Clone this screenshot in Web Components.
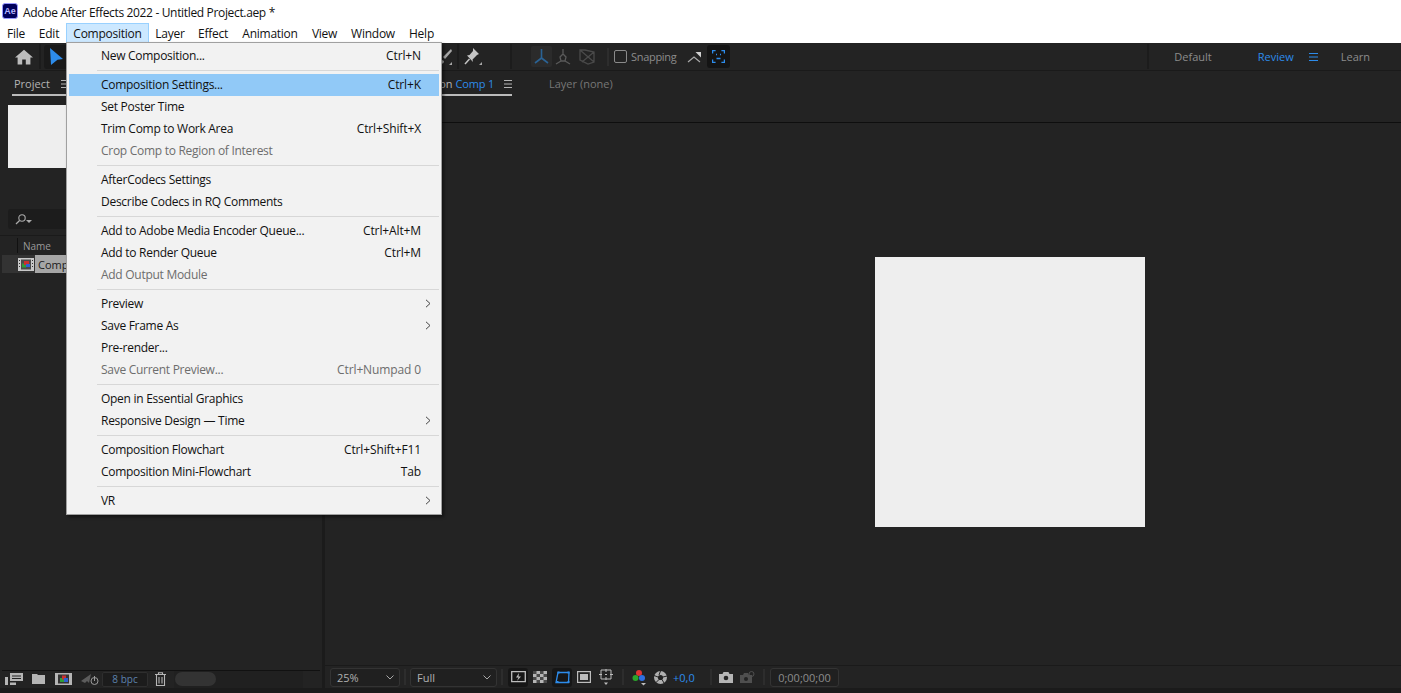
<!DOCTYPE html>
<html lang="en">
<head>
<meta charset="UTF-8" />
<title>Adobe After Effects 2022</title>
<style>
    html, body { margin: 0; height: 100%; background: #1b1b1b; overflow: hidden; }
    body { font-family: "Open Sans", "Noto Sans", sans-serif; }
</style>
</head>
<body>
<ae-app>
    <ae-title-bar title-text="Adobe After Effects 2022 - Untitled Project.aep *"></ae-title-bar>
    <ae-menu-bar></ae-menu-bar>
    <ae-toolbar></ae-toolbar>
    <ae-workspace>
        <ae-project-panel slot="left"></ae-project-panel>
        <ae-viewer-panel slot="right"></ae-viewer-panel>
    </ae-workspace>
    <ae-menu>
        <ae-menu-item shortcut="Ctrl+N">New Composition...</ae-menu-item>
        <ae-menu-sep></ae-menu-sep>
        <ae-menu-item shortcut="Ctrl+K" active>Composition Settings...</ae-menu-item>
        <ae-menu-item>Set Poster Time</ae-menu-item>
        <ae-menu-item shortcut="Ctrl+Shift+X">Trim Comp to Work Area</ae-menu-item>
        <ae-menu-item disabled>Crop Comp to Region of Interest</ae-menu-item>
        <ae-menu-sep></ae-menu-sep>
        <ae-menu-item>AfterCodecs Settings</ae-menu-item>
        <ae-menu-item>Describe Codecs in RQ Comments</ae-menu-item>
        <ae-menu-sep></ae-menu-sep>
        <ae-menu-item shortcut="Ctrl+Alt+M">Add to Adobe Media Encoder Queue...</ae-menu-item>
        <ae-menu-item shortcut="Ctrl+M">Add to Render Queue</ae-menu-item>
        <ae-menu-item disabled>Add Output Module</ae-menu-item>
        <ae-menu-sep></ae-menu-sep>
        <ae-menu-item submenu>Preview</ae-menu-item>
        <ae-menu-item submenu>Save Frame As</ae-menu-item>
        <ae-menu-item>Pre-render...</ae-menu-item>
        <ae-menu-item disabled shortcut="Ctrl+Numpad 0">Save Current Preview...</ae-menu-item>
        <ae-menu-sep></ae-menu-sep>
        <ae-menu-item>Open in Essential Graphics</ae-menu-item>
        <ae-menu-item submenu>Responsive Design — Time</ae-menu-item>
        <ae-menu-sep></ae-menu-sep>
        <ae-menu-item shortcut="Ctrl+Shift+F11">Composition Flowchart</ae-menu-item>
        <ae-menu-item shortcut="Tab">Composition Mini-Flowchart</ae-menu-item>
        <ae-menu-sep></ae-menu-sep>
        <ae-menu-item submenu>VR</ae-menu-item>
    </ae-menu>
</ae-app>

<script type="module">
    const MENU_FONT = '"Open Sans", "Noto Sans", sans-serif';

    // small helper, every element here is just a shadow root with a fixed template
    function define(name, html, init) {
        customElements.define(name, class extends HTMLElement {
            constructor() {
                super();
                this.attachShadow({ mode: 'open' });
                this.shadowRoot.innerHTML = html;
                if (init) init(this);
            }
        });
    }

    define('ae-app', `
        <style>
            :host { display: flex; flex-direction: column; position: relative; width: 1401px; height: 693px; overflow: hidden; }
        </style>
        <slot></slot>
    `);

    define('ae-title-bar', `
        <style>
            :host { display: flex; align-items: center; height: 23px; background: #fff; color: #111; font: 12px ${MENU_FONT}; letter-spacing: -0.34px; padding: 1px 0 0 2px; box-sizing: border-box; }
            .logo { width: 16px; height: 16px; border-radius: 3px; background: #00005b; border: 1px solid #9999ff; box-sizing: border-box; color: #b5b5ff; font: bold 9px "Liberation Sans", sans-serif; letter-spacing: 0; display: flex; align-items: center; justify-content: center; margin: -2px 5px 0 0; }
        </style>
        <span class="logo">Ae</span><span class="t"></span>
    `, el => {
        el.shadowRoot.querySelector('.t').textContent = el.getAttribute('title-text');
    });

    define('ae-menu-bar', `
        <style>
            :host { display: flex; height: 20px; background: #fff; color: #111; font: 12px ${MENU_FONT}; letter-spacing: -0.25px; }
            span { display: flex; align-items: center; padding: 0 6px 1px; border: 1px solid transparent; border-bottom: 0; box-sizing: border-box; white-space: nowrap; justify-content: center; }
            .on { background: #cce8ff; border-color: #99d1ff; }
        </style>
        <span style="width:32px">File</span>
        <span style="width:34px">Edit</span>
        <span class="on" style="width:83px">Composition</span>
        <span style="width:42px">Layer</span>
        <span style="width:44px">Effect</span>
        <span style="width:70px">Animation</span>
        <span style="width:39px">View</span>
        <span style="width:58px">Window</span>
        <span style="width:39px">Help</span>
    `);

    define('ae-menu', `
        <style>
            :host { position: absolute; left: 66px; top: 42px; width: 376px; box-sizing: border-box; background: #f2f2f2; border: 1px solid #a0a0a0; padding: 2px; box-shadow: 2px 2px 3px rgba(0,0,0,.45); z-index: 5; }
        </style>
        <slot></slot>
    `);

    define('ae-menu-item', `
        <style>
            :host { display: flex; align-items: center; height: 22px; box-sizing: border-box; padding: 0 18px 2px 32px; font: 12px ${MENU_FONT}; letter-spacing: -0.28px; color: #111; position: relative; white-space: nowrap; }
            :host([active]) { background: #91c9f7; }
            :host([disabled]) { color: #6d6d6d; }
            .sc { margin-left: auto; letter-spacing: -0.12px; }
            svg { position: absolute; right: 8px; top: 6px; }
        </style>
        <slot></slot><span class="sc"></span>
    `, el => {
        const s = el.shadowRoot;
        if (el.hasAttribute('shortcut')) s.querySelector('.sc').textContent = el.getAttribute('shortcut');
        if (el.hasAttribute('submenu')) {
            s.querySelector('.sc').insertAdjacentHTML('afterend', '<svg width="6" height="9" viewBox="0 0 6 9"><path d="M1 .8 5 4.5 1 8.2" fill="none" stroke="#444" stroke-width="1"/></svg>');
        }
    });

    define('ae-menu-sep', `
        <style>
            :host { display: block; height: 1px; margin: 3px 0 3px 28px; background: #d7d7d7; }
        </style>
    `);

    define('ae-toolbar', `
        <style>
            :host { display: flex; align-items: center; height: 27px; background: #232323; color: #8c8c8c; font: 11px "Open Sans", sans-serif; border-bottom: 1px solid #1a1a1a; flex: none; }
            .home { margin-left: 15px; }
            .sep { width: 2px; height: 25px; background: #1c1c1c; flex: none; }
            .sel { width: 24px; height: 24px; background: #1a1a1a; border-radius: 3px; margin-left: 3px; display: flex; align-items: center; justify-content: center; flex: none; }
            .under { width: 370px; flex: none; }
            .axis { width: 21px; height: 21px; margin-left: 19px; background: #2b2b2b; border-radius: 2px; flex: none; }
            .check { width: 11px; height: 11px; border: 1.5px solid #8a8a8a; border-radius: 2px; margin: 0 4px 0 5px; flex: none; }
            .focus { width: 23px; height: 23px; background: #141414; border-radius: 3px; margin-left: 6px; display: flex; align-items: center; justify-content: center; flex: none; }
            .ws { margin-left: auto; display: flex; align-items: center; height: 100%; }
            .ws span { white-space: nowrap; }
            .blue { color: #2d8ceb; }
        </style>
        <svg class="home" width="18" height="16" viewBox="0 0 18 16"><path d="M9 .8 0 8.600h2.600V15.500h4.600v-5h3.600v5h4.600V8.600H18z" fill="#bdbdbd"/></svg>
        <span class="sep" style="margin-left:6px"></span>
        <span class="sel"><svg width="13" height="17" viewBox="0 0 13 17"><path d="M0 0 13 11 7.500 11.800 1 17z" fill="#2d8ceb"/></svg></span>
        <span class="under"></span>
        <svg width="14" height="18" viewBox="0 0 14 18" style="flex:none"><path d="M13 1 5 9l2 2 7-8zM1 15c2 0 3-1 3-3l2 1c0 3-2 3-5 2z" fill="#a8a8a8"/><path d="M11 17h3v-3z" fill="#a8a8a8"/></svg>
        <span class="sep" style="margin-left:5px"></span>
        <svg width="20" height="20" viewBox="0 0 20 20" style="margin-left:4px;flex:none"><path d="M10 1 16 7 14 8 9.500 12.500 10 15 4 8.500 6.500 8 10 4z" fill="#c4c4c4"/><path d="M6.500 12 2 17" stroke="#c4c4c4" stroke-width="1.500"/><path d="M16 18h3v-3z" fill="#a8a8a8"/></svg>
        <span class="sep" style="margin-left:27px"></span>
        <svg class="axis" viewBox="0 0 21 21"><g fill="none" stroke="#2a6294" stroke-width="1.600"><path d="M10.500 3v9M10.500 12 4 17M10.500 12l6.500 5"/></g></svg>
        <svg width="20" height="20" viewBox="0 0 20 20" style="margin-left:1px;flex:none"><g fill="none" stroke="#5a5a5a" stroke-width="1.300"><path d="M10 2v5M7 10l3-3 3 3-1 4H8zM8 14l-5 3M12 14l5 3"/></g></svg>
        <svg width="18" height="18" viewBox="0 0 18 18" style="margin-left:5px;flex:none"><g fill="none" stroke="#4a4a4a" stroke-width="1.300"><path d="M2 2h5l9 2v10l-6 2-8-4zM2 2l14 12M16 4 4 14"/></g></svg>
        <span class="sep" style="height:18px;margin-left:11px;background:#2d2d2d"></span>
        <span class="check"></span>
        <span style="white-space:nowrap;letter-spacing:-.3px">Snapping</span>
        <svg width="14" height="14" viewBox="0 0 14 14" style="margin-left:11px;flex:none"><path d="M1 12 7 7l6 5" fill="none" stroke="#a8a8a8" stroke-width="1.200"/><path d="M8.500 2H14v5.500z" fill="#d0d0d0"/></svg>
        <span class="focus"><svg width="13" height="13" viewBox="0 0 13 13"><g fill="none" stroke="#2d8ceb" stroke-width="1.300"><path d="M.6 3.500V.6h3M9.400.6h3v2.900M12.400 9.500v2.900h-3M3.600 12.400h-3V9.500M4 4.500h1M8 4.500h1M4.500 8.500h4"/></g></svg></span>
        <div class="ws">
            <span class="sep" style="margin-right:25px"></span>
            <span>Default</span>
            <span class="blue" style="margin-left:46px">Review</span>
            <svg width="9" height="8" viewBox="0 0 9 8" style="margin-left:15px"><path d="M0 .5h9M0 4h9M0 7.500h9" stroke="#2d8ceb"/></svg>
            <span style="margin:0 31px 0 23px">Learn</span>
        </div>
    `);

    define('ae-workspace', `
        <style>
            :host { display: flex; gap: 3px; height: 617px; flex: none; }
            ::slotted([slot=left]) { width: 322px; flex: none; }
            ::slotted([slot=right]) { flex: 1; min-width: 0; }
        </style>
        <slot name="left"></slot><slot name="right"></slot>
    `);

    define('ae-hamburger', `
        <style>
            :host { display: inline-flex; }
        </style>
        <svg width="8" height="8" viewBox="0 0 8 8"><path d="M0 .5h8M0 4h8M0 7.500h8" stroke="#b4b4b4"/></svg>
    `);

    define('ae-project-panel', `
        <style>
            :host { display: flex; flex-direction: column; background: #232323; color: #b4b4b4; font: 11px "Open Sans", sans-serif; }
            .tab { display: flex; align-items: center; justify-content: space-between; width: 57px; height: 25px; margin-left: 12px; padding: 2px 0 0 2px; box-sizing: border-box; border-bottom: 2px solid #bbb; white-space: nowrap; }
            .thumb { width: 120px; height: 63px; margin: 9px 0 0 8px; background: #eee; }
            .search { display: flex; align-items: center; width: 120px; height: 20px; margin: 41px 0 0 8px; background: #1c1c1c; border-radius: 3px; padding-left: 7px; box-sizing: border-box; }
            .head { display: flex; align-items: center; height: 19px; margin-top: 6px; border-top: 1px solid #1a1a1a; font-size: 10px; color: #9a9a9a; }
            .head i { width: 1px; height: 15px; background: #111; margin: 0 5px 0 17px; }
            .row { display: flex; align-items: center; height: 18px; margin-left: 2px; background: #333; }
            .icon { margin-left: 16px; flex: none; }
            .name { background: #a6a6a6; color: #1a1a1a; height: 100%; display: flex; align-items: center; padding: 0 0 0 3px; margin-left: 1px; white-space: nowrap; width: 60px; }
            .fill { flex: 1; }
            .foot { display: flex; align-items: center; height: 16px; padding-bottom: 1px; border-top: 1px solid #111; margin: 0 2px; }
            .foot svg { flex: none; }
            .bpc { width: 46px; height: 15px; background: #1c1c1c; border: 1px solid #2e2e2e; border-radius: 2px; color: #5d82ad; font-size: 10px; display: flex; align-items: center; justify-content: center; box-sizing: border-box; margin-left: 3px; flex: none; }
            .pill { width: 41px; height: 14px; background: #333; border-radius: 8px; flex: none; margin-left: 1px; }
            .dark { width: 129px; height: 17px; background: #202020; margin: -1px 0 -1px 8px; display: flex; align-items: center; flex: none; }
        </style>
        <div class="tab">Project<ae-hamburger></ae-hamburger></div>
        <div class="thumb"></div>
        <div class="search"><svg width="18" height="11" viewBox="0 0 18 11"><circle cx="7" cy="4" r="3.200" fill="none" stroke="#aaa" stroke-width="1.100"/><path d="M4.600 6.500 1 10" stroke="#aaa" stroke-width="1.200"/><path d="M11 6h6l-3 3z" fill="#aaa"/></svg></div>
        <div class="head"><i></i>Name</div>
        <div class="row">
            <svg class="icon" width="16" height="13" viewBox="0 0 16 13"><rect width="16" height="13" fill="#c8c8c8"/><rect x="3" y="1.500" width="10" height="10" fill="#4a4a4a"/><path d="M1 2h1v1H1zM1 5h1v1H1zM1 8h1v1H1zM14 2h1v1h-1zM14 5h1v1h-1zM14 8h1v1h-1z" fill="#333"/><rect x="4" y="5.500" width="4" height="4" fill="#2e9c3a"/><rect x="6" y="3" width="5" height="4" fill="#c93030"/><rect x="8" y="6" width="4" height="3" fill="#2f5fd0"/></svg>
            <span class="name">Comp 1</span>
        </div>
        <div class="fill"></div>
        <div class="foot">
            <svg width="18" height="12" viewBox="0 0 18 12" style="margin-left:3px"><path d="M5 0h13v8H5zM7 2.500h9v1H7zM7 5h9v1H7z" fill="#b5b5b5" fill-rule="evenodd"/><path d="M0 4h3v8H0zM5 9.500h6V12H5z" fill="#b5b5b5"/></svg>
            <svg width="13" height="10" viewBox="0 0 13 10" style="margin-left:9px"><path d="M0 0h5l1 1h7v9H0z" fill="#b5b5b5"/></svg>
            <svg width="17" height="12" viewBox="0 0 17 12" style="margin-left:10px"><rect width="17" height="12" fill="#b5b5b5"/><rect x="3" y="1.500" width="11" height="9" fill="#333"/><rect x="5" y="5" width="4" height="4" fill="#2e9c3a"/><rect x="7" y="2.500" width="4" height="4" fill="#c93030"/><rect x="9" y="5" width="4" height="4" fill="#2f5fd0"/></svg>
            <svg width="18" height="13" viewBox="0 0 18 13" style="margin-left:9px"><path d="M0 8 10 1l-2 9-2-2-2 2z" fill="#5c5c5c"/><circle cx="13.500" cy="8" r="3.500" fill="none" stroke="#9a9a9a"/><path d="M13.500 3v5" stroke="#9a9a9a"/></svg>
            <span class="bpc">8 bpc</span>
            <svg width="11" height="14" viewBox="0 0 11 14" style="margin-left:7px"><path d="M0 2.500h11M3.500 2.500V.7h4v1.800M1.500 3v10.500h8V3M4 5v6.500M7 5v6.500" fill="none" stroke="#b5b5b5" stroke-width="1.100"/></svg>
            <div class="dark"><span class="pill"></span></div>
        </div>
    `);

    define('ae-dropdown', `
        <style>
            :host { display: flex; align-items: center; justify-content: space-between; height: 19px; box-sizing: border-box; padding: 0 5px 0 6px; border: 1px solid #333; border-radius: 3px; background: #202020; color: #b0b0b0; font: 11px "Open Sans", sans-serif; flex: none; }
        </style>
        <slot></slot><svg width="8" height="5" viewBox="0 0 8 5"><path d="M.5.500 4 4l3.500-3.500" fill="none" stroke="#a8a8a8"/></svg>
    `);

    define('ae-viewer-panel', `
        <style>
            :host { display: flex; flex-direction: column; background: #232323; color: #777; font: 11px "Open Sans", sans-serif; }
            .tabs { display: flex; height: 51px; border-bottom: 1px solid #0e0e0e; flex: none; box-sizing: content-box; align-items: flex-start; }
            .tab { display: flex; align-items: center; justify-content: flex-end; width: 187px; height: 25px; box-sizing: border-box; padding-top: 2px; border-bottom: 2px solid #bbb; color: #b4b4b4; white-space: nowrap; flex: none; }
            .tab b { font-weight: normal; color: #2d8ceb; margin: 0 10px 0 3px; letter-spacing: -.2px; }
            .layer { display: flex; align-items: center; height: 25px; padding-bottom: 1px; box-sizing: border-box; margin-left: 37px; white-space: nowrap; }
            .stage { flex: 1; padding: 134px 0 0 550px; }
            .comp { width: 270px; height: 270px; background: #eee; }
            .bar { display: flex; align-items: center; height: 22px; border-top: 1px solid #1a1a1a; padding-left: 5px; flex: none; }
            .bar svg { flex: none; }
            .sep { width: 2px; height: 16px; background: #2d2d2d; flex: none; }
            .on { width: 20px; height: 19px; background: #161616; border-radius: 3px; display: flex; align-items: center; justify-content: center; flex: none; }
            .blue { color: #2d8ceb; }
            .time { width: 69px; height: 19px; box-sizing: border-box; border: 1px solid #333; border-radius: 3px; background: #202020; color: #8c8c8c; display: flex; align-items: center; justify-content: center; flex: none; }
        </style>
        <div class="tabs">
            <div class="tab">on<b>Comp 1</b><ae-hamburger></ae-hamburger></div>
            <div class="layer">Layer (none)</div>
        </div>
        <div class="stage"><div class="comp"></div></div>
        <div class="bar">
            <ae-dropdown style="width:70px">25%</ae-dropdown>
            <span class="sep" style="margin-left:4px"></span>
            <ae-dropdown style="width:87px;margin-left:4px">Full</ae-dropdown>
            <span class="sep" style="margin-left:4px"></span>
            <span class="on" style="margin-left:5px"><svg width="15" height="13" viewBox="0 0 15 13"><path d="M.7.7h13.600v10H.7z" fill="none" stroke="#bdbdbd" stroke-width="1.300"/><path d="M8 2 5 6.500h2.500L6 10l4-4.500H7.500z" fill="#bdbdbd"/></svg></span>
            <svg width="14" height="12" viewBox="0 0 14 12" style="margin-left:5px"><rect width="14" height="12" fill="#b5b5b5"/><path d="M0 0h3.500v3H0zM7 0h3.500v3H7zM3.500 3H7v3H3.500zM10.500 3H14v3h-3.500zM0 6h3.500v3H0zM7 6h3.500v3H7zM3.500 9H7v3H3.500zM10.500 9H14v3h-3.500z" fill="#4a4a4a"/></svg>
            <span class="on" style="margin-left:5px"><svg width="15" height="13" viewBox="0 0 15 13"><path d="M3 1.500h11l-.5 10H1z" fill="none" stroke="#2d8ceb" stroke-width="1.300"/><path d="M1.500 10h2v2h-2zM2.500 .5h2v2h-2zM12.500.5h2v2h-2zM12.500 10h2v2h-2z" fill="#2d8ceb"/></svg></span>
            <svg width="14" height="12" viewBox="0 0 14 12" style="margin-left:5px"><rect x=".6" y=".6" width="12.800" height="10.800" fill="none" stroke="#bdbdbd" stroke-width="1.200"/><rect x="3" y="3" width="8" height="6" fill="#bdbdbd"/></svg>
            <svg width="14" height="17" viewBox="0 0 14 17" style="margin-left:8px"><path d="M2 1h10v9H2z" fill="none" stroke="#bdbdbd"/><path d="M7 0v3M7 8v3M0 5.500h3M11 5.500h3M6 5.500h2" stroke="#bdbdbd"/><path d="M5 13.500h4l-2 2.500z" fill="#bdbdbd"/></svg>
            <span class="sep" style="margin-left:9px"></span>
            <svg width="15" height="17" viewBox="0 0 15 17" style="margin-left:8px"><circle cx="7" cy="4" r="3" fill="#d33"/><circle cx="3.500" cy="9" r="3" fill="#2ba52b"/><circle cx="10" cy="9" r="3" fill="#2f6fe0"/><path d="M9 14h5l-2.500 2.500z" fill="#bdbdbd"/></svg>
            <svg width="13" height="13" viewBox="0 0 13 13" style="margin-left:7px"><circle cx="6.500" cy="6.500" r="6.500" fill="#b0b0b0"/><circle cx="6.500" cy="6.500" r="2.600" fill="#232323"/><path d="M6.500 0 5 4M13 5 9 6M10 12 8 8.500M2 11.500 5 8.500M0 4.500 4 6" stroke="#232323" stroke-width="1"/></svg>
            <span class="blue" style="margin-left:6px;width:22px;white-space:nowrap;flex:none">+0,0</span>
            <span class="sep" style="margin-left:15px"></span>
            <svg width="14" height="11" viewBox="0 0 14 11" style="margin-left:7px"><path d="M0 2h3.500l1-2h5l1 2H14v9H0z" fill="#b5b5b5"/><circle cx="7" cy="6" r="2.300" fill="#232323"/></svg>
            <svg width="15" height="13" viewBox="0 0 15 13" style="margin-left:7px"><path d="M0 4h3l1-2h4l1 2h3v8H0z" fill="#4f4f4f"/><circle cx="6" cy="8" r="2" fill="#232323"/><circle cx="11.500" cy="3" r="2.500" fill="none" stroke="#4f4f4f"/></svg>
            <span class="sep" style="margin-left:8px"></span>
            <span class="time" style="margin-left:5px">0;00;00;00</span>
        </div>
    `);
</script>
</body>
</html>
